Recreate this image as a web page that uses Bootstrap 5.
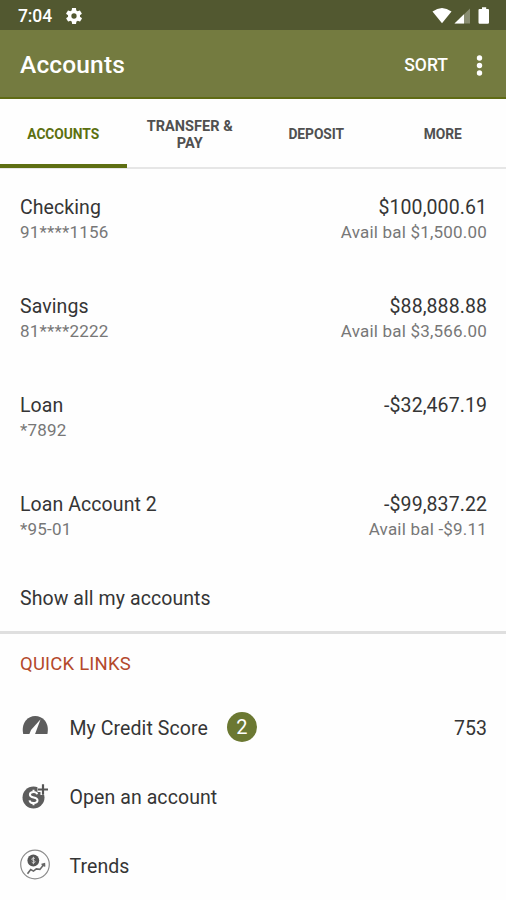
<!DOCTYPE html>
<html lang="en">
<head>
<meta charset="utf-8">
<meta name="viewport" content="width=device-width, initial-scale=1">
<title>Accounts</title>
<link href="https://cdn.jsdelivr.net/npm/bootstrap@5.3.0/dist/css/bootstrap.min.css" rel="stylesheet">
<style>
body{font-family:Roboto,"Liberation Sans",sans-serif;background:#fefefe;color:#353535;height:900px;overflow:hidden}
svg{display:block;flex:none}
.status-strip{height:30px;background:#525830;color:#fff;padding:2px 15px 0 18px;font-size:17.5px;font-weight:500;letter-spacing:-.1px}
.status-strip .gear{margin-left:14px}
.app-header{height:69px;background:#747b40;border-bottom:2px solid #5f6b14;color:#fff;padding:4px 20px 0}
.app-header h1{font-size:24.5px;font-weight:500;letter-spacing:.15px;line-height:1}
.sort-action{font-size:17.5px;font-weight:500;letter-spacing:0;line-height:1;margin-right:24px;padding-top:1px}
.main-tabs{height:70px;border-bottom:2px solid #e6e6e6}
.main-tabs .nav-link{height:69px;padding:1px 10px 0;color:#505050;font-size:13.800px;font-weight:700;line-height:17px;letter-spacing:-.05px;border-radius:0}
.main-tabs .nav-link.active{color:#5c7010;border-bottom:4px solid #5e6f13;padding-top:5px}
.main-tabs .two-line{font-size:14.500px;letter-spacing:.05px;padding-top:2px}
.account-list{padding-top:26px}
.account{height:99px;padding:0 19px 0 20px}
.title-text{font-size:19.5px;line-height:25px;letter-spacing:.08px}
.sub-text{font-size:17px;line-height:24px;color:#777;letter-spacing:.2px}
.show-all{height:48px;margin-top:-5px;padding:0 20px;border-bottom:3px solid #dfdfdf}
.section-title{font-size:18.5px;font-weight:400;color:#b4492b;line-height:24px;padding:18px 20px 0;margin-bottom:18px;letter-spacing:.2px}
.quick-link{height:69px;padding:0 19px 0 20px}
.icon-slot{width:49.500px}
.count-badge{width:30px;height:30px;background:#6b7832;color:#fff;font-size:20px;line-height:1;margin:-3px 0 0 19px}
</style>
</head>
<body>
<div class="status-strip d-flex align-items-center">
  <span>7:04</span>
  <svg class="gear" width="16" height="16" viewBox="2 2 20 20" fill="#fff"><path fill-rule="evenodd" d="M19.4 13c.1-.3.1-.7.1-1s0-.7-.1-1l2.100-1.600c.2-.2.300-.4.100-.700l-2-3.400c-.1-.2-.4-.3-.6-.2l-2.500 1c-.5-.4-1.100-.7-1.700-1L14.500 2.400c0-.2-.2-.4-.5-.4h-4c-.3 0-.5.200-.5.400L9.100 5.100c-.6.300-1.200.6-1.700 1l-2.500-1c-.2-.1-.5 0-.6.200l-2 3.400c-.1.200-.1.500.1.700L4.600 11a8 8 0 0 0 0 2l-2.100 1.600c-.2.200-.3.500-.1.700l2 3.400c.1.200.4.300.6.200l2.500-1c.5.400 1.100.700 1.700 1l.4 2.700c0 .2.200.4.500.4h4c.3 0 .5-.2.500-.4l.4-2.700c.6-.3 1.200-.6 1.700-1l2.500 1c.2.100.5 0 .6-.2l2-3.400c.1-.2.1-.5-.1-.7L19.400 13zM12 15.300a3.300 3.300 0 1 1 0-6.600 3.300 3.300 0 0 1 0 6.600z"/></svg>
  <svg class="ms-auto" width="59" height="18" viewBox="0 0 59 18" fill="#fff">
    <path d="M.5 4.500Q10 -2.500 19.500 4.500L10 16.300z"/>
    <path d="M22.500 16.500H38V1.500z" opacity=".32"/><path d="M22.500 16.500H32V7.300z"/>
    <path d="M46.500 3q0-1 1-1H50V.3h4.200V2h1.800q1 0 1 1v12.500q0 1.300-1.300 1.300h-8q-1.200 0-1.200-1.300z"/>
  </svg>
</div>
<header class="app-header d-flex align-items-center">
  <h1 class="m-0 me-auto">Accounts</h1>
  <span class="sort-action">SORT</span>
  <svg width="14" height="22" viewBox="0 0 14 22" fill="#fff"><circle cx="7.500" cy="3" r="2.700"/><circle cx="7.500" cy="10.500" r="2.700"/><circle cx="7.500" cy="18" r="2.700"/></svg>
</header>
<nav class="main-tabs nav nav-fill flex-nowrap row g-0">
  <a class="col-3 nav-link active d-flex align-items-center justify-content-center">ACCOUNTS</a>
  <a class="col-3 nav-link two-line d-flex align-items-center justify-content-center">TRANSFER &amp;<br>PAY</a>
  <a class="col-3 nav-link d-flex align-items-center justify-content-center">DEPOSIT</a>
  <a class="col-3 nav-link d-flex align-items-center justify-content-center">MORE</a>
</nav>
<main>
  <section class="account-list">
    <div class="account d-flex justify-content-between">
      <div><div class="title-text">Checking</div><div class="sub-text">91****1156</div></div>
      <div class="text-end"><div class="title-text">$100,000.61</div><div class="sub-text">Avail bal $1,500.00</div></div>
    </div>
    <div class="account d-flex justify-content-between">
      <div><div class="title-text">Savings</div><div class="sub-text">81****2222</div></div>
      <div class="text-end"><div class="title-text">$88,888.88</div><div class="sub-text">Avail bal $3,566.00</div></div>
    </div>
    <div class="account d-flex justify-content-between">
      <div><div class="title-text">Loan</div><div class="sub-text">*7892</div></div>
      <div class="text-end"><div class="title-text">-$32,467.19</div></div>
    </div>
    <div class="account d-flex justify-content-between">
      <div><div class="title-text">Loan Account 2</div><div class="sub-text">*95-01</div></div>
      <div class="text-end"><div class="title-text">-$99,837.22</div><div class="sub-text">Avail bal -$9.11</div></div>
    </div>
    <div class="show-all title-text">Show all my accounts</div>
  </section>
  <section>
    <h2 class="section-title">QUICK LINKS</h2>
    <div class="quick-link d-flex align-items-center">
      <div class="icon-slot">
        <svg width="30" height="30" viewBox="0 1 30 30"><path d="M3.200 21C2.300 16.500 2.600 11.500 5.800 7.500C8.200 4.600 11.500 3 15.200 3S22.400 4.600 24.800 7.500C28 11.500 28.300 16.500 27.400 21z" fill="#5d5d5d"/><path d="M20.600 6.300L15 21.200H9.300L11 17z" fill="#fefefe"/></svg>
      </div>
      <span class="title-text">My Credit Score</span>
      <span class="count-badge rounded-circle d-inline-flex align-items-center justify-content-center">2</span>
      <span class="title-text ms-auto">753</span>
    </div>
    <div class="quick-link d-flex align-items-center">
      <div class="icon-slot">
        <svg width="30" height="30" viewBox="0 0 30 30"><circle cx="13.500" cy="14.500" r="11" fill="#5d5d5d"/><path d="M23 1v11M17.500 6.500h11" stroke="#fefefe" stroke-width="5"/><path d="M23 1.300v10.400M18 6.500h10" stroke="#555" stroke-width="2.200"/><path d="M17.200 11.200c-.5-1.500-1.900-2.100-3.700-2.100-2.100 0-3.600 1-3.600 2.700 0 3.900 7.600 1.700 7.600 5.500 0 1.700-1.600 2.800-3.900 2.800-2.200 0-3.800-.9-4.100-2.800M13.500 6.800v2.500M13.500 19.800v2.500" fill="none" stroke="#fefefe" stroke-width="2"/></svg>
      </div>
      <span class="title-text">Open an account</span>
    </div>
    <div class="quick-link d-flex align-items-center">
      <div class="icon-slot pb-1">
        <svg width="32" height="32" viewBox="0 0 32 32"><circle cx="15" cy="15.500" r="14.300" fill="#fefefe" stroke="#8c8c8c" stroke-width="1.200"/><circle cx="13.300" cy="11.500" r="5.900" fill="#555"/><path d="M15 9.800c-.5-1-3.200-1.100-3.200.4 0 1.600 3.300.9 3.300 2.500 0 1.400-2.700 1.500-3.400.4M13.400 7.800v7.400" fill="none" stroke="#ddd" stroke-width=".9"/><path d="M7.500 24.800l3.200-4.300 2.800 1.600 2.800-2.200 3.600.5 4.300-5.300M21.500 15.500l2.900-.7.200 2.800" fill="none" stroke="#666" stroke-width="1.600"/></svg>
      </div>
      <span class="title-text">Trends</span>
    </div>
  </section>
</main>
<script src="https://cdn.jsdelivr.net/npm/bootstrap@5.3.0/dist/js/bootstrap.bundle.min.js"></script>
</body>
</html>
